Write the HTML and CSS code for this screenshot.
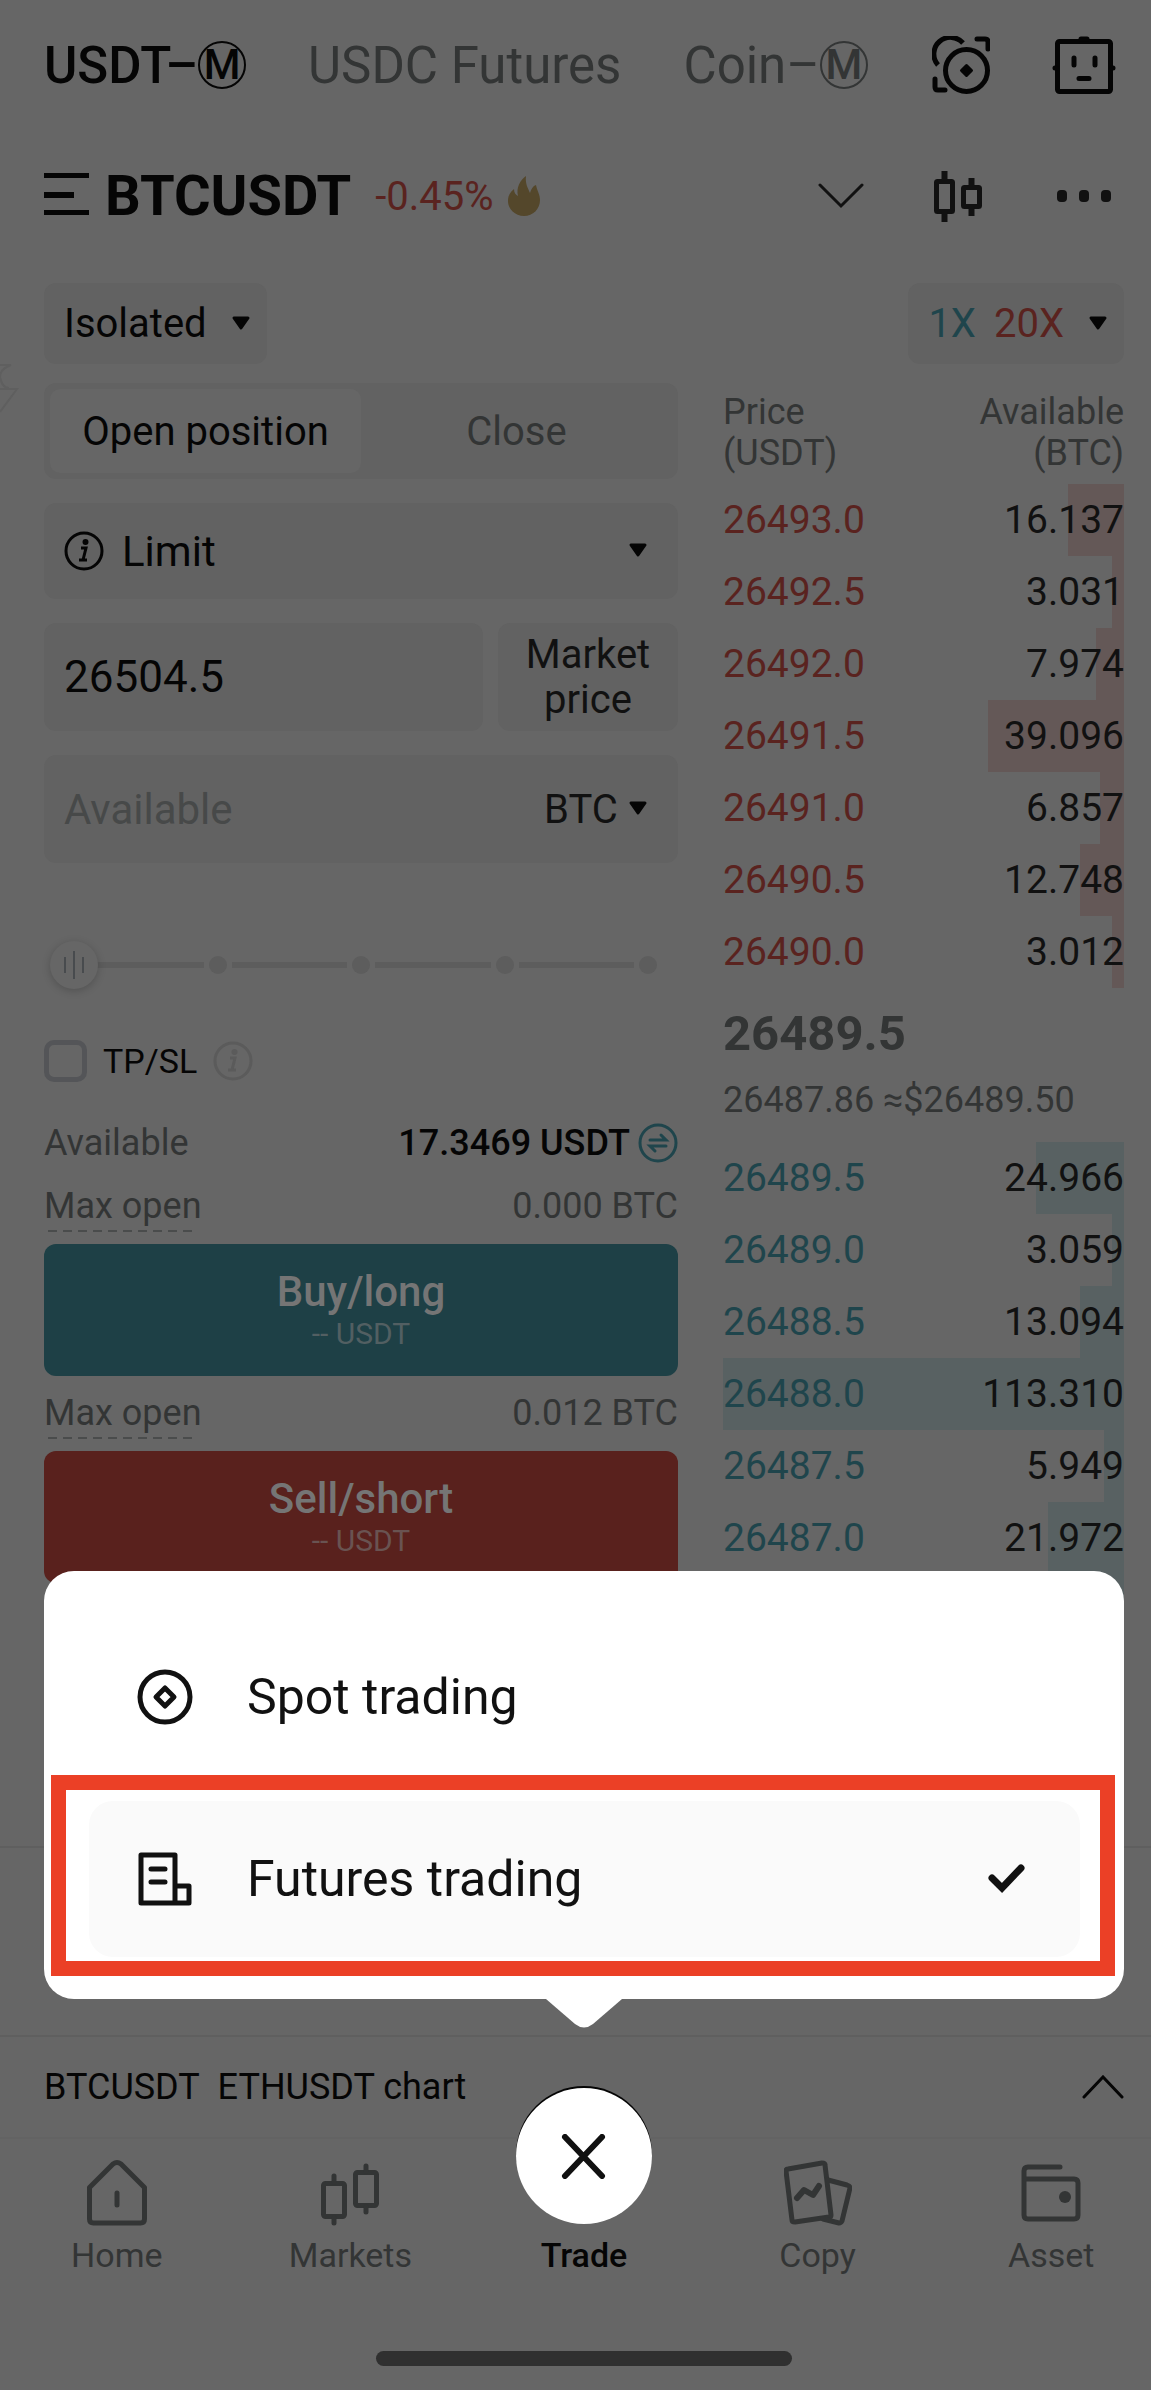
FILE: index.html
```html
<!DOCTYPE html>
<html lang="en">
<head>
    <meta charset="UTF-8">
    <meta name="viewport" content="width=device-width, initial-scale=1.0">
    <title>BTCUSDT Futures</title>
    <link rel="stylesheet" href="styles.css">
</head>
<body>
    <div class="app">
        <header class="topbar">
            <nav class="tabs">
                <a href="#usdt" class="active">USDT–<span class="circled">M</span></a>
                <a href="#usdc">USDC Futures</a>
                <a href="#coin">Coin–<span class="circled">M</span></a>
            </nav>
            <div class="icons">
                <button type="button" aria-label="Convert">
                    <svg width="58" height="58" viewBox="0 0 58 58" fill="none" stroke="#050505" stroke-width="5" stroke-linecap="round">
                        <path d="M31 7A16 16 0 0 0 6 29" stroke-linecap="butt"/>
                        <path d="M45 3h8q3 0 3 3v7M3 43v8q0 3 3 3h7"/>
                        <circle cx="34.500" cy="34.500" r="21"/>
                        <path d="M34.500 29.500l5 5-5 5-5-5z" fill="#050505" stroke-width="3" stroke-linejoin="round"/>
                    </svg>
                </button>
                <button type="button" aria-label="Trading bot">
                    <svg width="64" height="58" viewBox="0 0 64 58" fill="none" stroke="#050505" stroke-width="5" stroke-linecap="round">
                        <rect x="5.500" y="5.500" width="53" height="50" rx="2"/>
                        <path d="M29 3h6M3 32h1M60 32h1M22 22v7M43 22v7M27 42.500h10"/>
                    </svg>
                </button>
            </div>
        </header>

        <section class="pair">
            <button type="button" aria-label="Menu">
                <svg width="45" height="46" viewBox="0 0 45 46" fill="#050505">
                    <path d="M0 0h45v5H0zM0 19h30v6H0zM0 37h45v5H0z"/>
                </svg>
            </button>
            <h1>BTCUSDT</h1>
            <span class="change">-0.45%</span>
            <svg width="32" height="40" viewBox="0 0 32 40" fill="#54472b">
                <path d="M18 0C12 4 8 12 10 20C8 19 6 17 6 13C2 16 0 20 0 25C0 33 7 40 16 40C25 40 32 33 32 24C32 18 29 15 28 9C25 10 23 13 22 17C20 12 17 8 18 0z"/>
            </svg>
            <div class="icons">
                <button type="button" aria-label="Expand chart">
                    <svg width="46" height="26" viewBox="0 0 46 26" fill="none" stroke="#111" stroke-width="3" stroke-linecap="round">
                        <path d="M2 2l21 21L44 2"/>
                    </svg>
                </button>
                <button type="button" aria-label="Candles">
                    <svg width="48" height="51" viewBox="0 0 48 51" fill="none" stroke="#111" stroke-width="5">
                        <rect x="2.500" y="10.500" width="16" height="30" rx="1"/>
                        <rect x="29.500" y="16.500" width="16" height="19" rx="1"/>
                        <path d="M10.500 0v9M10.500 41v10M37.500 7v8M37.500 36v9" stroke-width="6"/>
                    </svg>
                </button>
                <button type="button" aria-label="More">
                    <svg width="64" height="12" viewBox="0 0 64 12" fill="#111">
                        <rect x="5" width="10" height="12" rx="4"/>
                        <rect x="27" width="10" height="12" rx="4"/>
                        <rect x="49" width="10" height="12" rx="4"/>
                    </svg>
                </button>
            </div>
        </section>

        <section class="mode-row">
            <div class="chip">
                <select aria-label="Margin mode">
                    <option>Isolated</option>
                </select>
                <svg class="caret" viewBox="0 0 20 16"><path d="M3 2h14l-7 10z"/></svg>
            </div>
            <button type="button" class="chip">
                <span class="long">1X</span>
                <span class="short">20X</span>
                <svg class="caret" viewBox="0 0 20 16"><path d="M3 2h14l-7 10z"/></svg>
            </button>
        </section>

        <svg class="float-icon" width="22" height="66" viewBox="0 0 22 66" fill="none" stroke="#5f5f5f" stroke-width="2">
            <path d="M0 9h11Q0 13 0 21Q2 32 9 32M0 33h17L0 56"/>
        </svg>

        <main class="trade">
            <form class="order-form">
                <div class="segmented">
                    <button type="button" class="active">Open position</button>
                    <button type="button">Close</button>
                </div>
                <div class="field order-type">
                    <svg width="40" height="40" viewBox="0 0 40 40" fill="none" stroke="#050505" stroke-width="3">
                        <circle cx="20" cy="20" r="18"/>
                        <path d="M17 17h5l-3 12M15 29h8"/>
                        <circle cx="21.500" cy="11" r="1.500"/>
                    </svg>
                    <select aria-label="Order type">
                        <option>Limit</option>
                    </select>
                    <svg class="caret" viewBox="0 0 20 16"><path d="M3 2h14l-7 10z"/></svg>
                </div>
                <div class="price-row">
                    <input type="text" class="field" value="26504.5" aria-label="Price">
                    <button type="button" class="field">Market price</button>
                </div>
                <div class="field amount">
                    <input type="text" placeholder="Available" aria-label="Amount">
                    <select aria-label="Unit">
                        <option>BTC</option>
                    </select>
                    <svg class="caret" viewBox="0 0 20 16"><path d="M3 2h14l-7 10z"/></svg>
                </div>

                <div class="slider">
                    <div class="marks">
                        <i class="line"></i><i class="dot"></i>
                        <i class="line"></i><i class="dot"></i>
                        <i class="line"></i><i class="dot"></i>
                        <i class="line"></i><i class="dot"></i>
                    </div>
                    <input type="range" min="0" max="100" value="0" aria-label="Amount percent">
                </div>

                <div class="tpsl">
                    <input type="checkbox" id="tpsl">
                    <label for="tpsl">TP/SL</label>
                    <svg width="40" height="40" viewBox="0 0 40 40" fill="none" stroke="#5b5b5b" stroke-width="3">
                        <circle cx="20" cy="20" r="18"/>
                        <path d="M17 17h5l-3 12M15 29h8"/>
                        <circle cx="21.500" cy="11" r="1.500"/>
                    </svg>
                </div>

                <div class="info-row">
                    <span>Available</span>
                    <span class="balance">17.3469 USDT
                        <svg width="40" height="40" viewBox="0 0 40 40" fill="none" stroke="#1f454c" stroke-width="3" stroke-linecap="round">
                            <circle cx="20" cy="20" r="18"/>
                            <path d="M12 17h16l-5-5M28 23H12l5 5"/>
                        </svg>
                    </span>
                </div>
                <div class="info-row max">
                    <span class="hint">Max open</span>
                    <span>0.000 BTC</span>
                </div>
                <button type="button" class="order buy">Buy/long<small>-- USDT</small></button>
                <div class="info-row max">
                    <span class="hint">Max open</span>
                    <span>0.012 BTC</span>
                </div>
                <button type="button" class="order sell">Sell/short<small>-- USDT</small></button>
            </form>

            <section class="book">
                <div class="book-head">
                    <span>Price<br>(USDT)</span>
                    <span>Available<br>(BTC)</span>
                </div>
                <ul class="asks">
                    <li style="--depth: 14%"><span>26493.0</span><b>16.137</b></li>
                    <li style="--depth: 3%"><span>26492.5</span><b>3.031</b></li>
                    <li style="--depth: 7%"><span>26492.0</span><b>7.974</b></li>
                    <li style="--depth: 34%"><span>26491.5</span><b>39.096</b></li>
                    <li style="--depth: 6%"><span>26491.0</span><b>6.857</b></li>
                    <li style="--depth: 11%"><span>26490.5</span><b>12.748</b></li>
                    <li style="--depth: 3%"><span>26490.0</span><b>3.012</b></li>
                </ul>
                <div class="last">
                    <strong>26489.5</strong>
                    <span>26487.86 ≈$26489.50</span>
                </div>
                <ul class="bids">
                    <li style="--depth: 22%"><span>26489.5</span><b>24.966</b></li>
                    <li style="--depth: 3%"><span>26489.0</span><b>3.059</b></li>
                    <li style="--depth: 11%"><span>26488.5</span><b>13.094</b></li>
                    <li style="--depth: 100%"><span>26488.0</span><b>113.310</b></li>
                    <li style="--depth: 5%"><span>26487.5</span><b>5.949</b></li>
                    <li style="--depth: 19%"><span>26487.0</span><b>21.972</b></li>
                    <li style="--depth: 12%"></li>
                </ul>
            </section>
        </main>

        <hr>

        <footer class="dock">
            <div class="sheet">
                <button type="button" class="option">
                    <svg width="56" height="56" viewBox="0 0 56 56" fill="none" stroke="#111" stroke-width="5">
                        <circle cx="28" cy="28" r="25"/>
                        <path d="M28 19l9 9-9 9-9-9z" stroke-linejoin="round"/>
                    </svg>
                    <span>Spot trading</span>
                </button>
                <div class="highlight">
                    <button type="button" class="option selected">
                        <svg width="56" height="56" viewBox="0 0 56 56" fill="none" stroke="#111" stroke-width="5" stroke-linejoin="round">
                            <path d="M4 4h34v48H4zM38 35h14v17H38z"/>
                            <path d="M14 18h14M14 31h14" stroke-linecap="round"/>
                        </svg>
                        <span>Futures trading</span>
                        <svg width="38" height="30" viewBox="0 0 38 30" fill="none" stroke="#111" stroke-width="7">
                            <path d="M4 14l10 10L33 4" stroke-linecap="round"/>
                        </svg>
                    </button>
                </div>
                <svg class="pointer" width="76" height="29" viewBox="0 0 76 29" fill="#fff">
                    <path d="M0 0h76L47 25q-9 7-18 0z"/>
                </svg>
            </div>

            <div class="chart-row">
                <span>BTCUSDT&nbsp; ETHUSDT chart</span>
                <button type="button" aria-label="Show chart">
                    <svg width="42" height="24" viewBox="0 0 42 24" fill="none" stroke="#050505" stroke-width="3" stroke-linecap="round">
                        <path d="M2 22L21 2l19 20"/>
                    </svg>
                </button>
            </div>

            <nav class="bottom-nav">
                <a href="#home">
                    <svg width="68" height="68" viewBox="0 0 68 68" fill="none" stroke="#333535" stroke-width="5" stroke-linecap="round">
                        <path d="M6.500 28.500L30 5q4-3 8 0l23.500 23.500V60q0 4-4 4h-47q-4 0-4-4z" stroke-linejoin="round"/>
                        <path d="M34 34v12"/>
                    </svg>
                    Home
                </a>
                <a href="#markets">
                    <svg width="68" height="68" viewBox="0 0 68 68" fill="none" stroke="#333535" stroke-width="5" stroke-linecap="round">
                        <rect x="7.500" y="24.500" width="21" height="33" rx="2"/>
                        <rect x="39.500" y="13.500" width="21" height="33" rx="2"/>
                        <path d="M18 17v6M18 59v5M50 7v5M50 48v5"/>
                    </svg>
                    Markets
                </a>
                <a href="#trade" class="active">
                    <span class="close">
                        <svg width="45" height="45" viewBox="0 0 45 45" stroke="#111" stroke-width="6" stroke-linecap="round">
                            <path d="M4 3l37 39M41 3L4 42"/>
                        </svg>
                    </span>
                    Trade
                </a>
                <a href="#copy">
                    <svg width="68" height="68" viewBox="0 0 68 68" fill="none" stroke="#333535" stroke-width="5" stroke-linejoin="round" stroke-linecap="round">
                        <path d="M2 12q0-2 2-2l34-6q3 0 3 2l6 50q0 2-2 2l-34 5q-3 0-3-2z"/>
                        <path d="M44 21l19 5q3 1 3 3l-8 33q-1 2-3 2l-16-4"/>
                        <path d="M13 39l7-8 9 5 6-9" stroke-width="6"/>
                    </svg>
                    Copy
                </a>
                <a href="#asset">
                    <svg width="68" height="68" viewBox="0 0 68 68" fill="none" stroke="#333535" stroke-width="5" stroke-linejoin="round" stroke-linecap="round">
                        <path d="M43 8H11q-4 0-4 4v44q0 4 4 4h46q4 0 4-4V24q0-4-4-4H8"/>
                        <circle cx="48" cy="38" r="6" fill="#333535" stroke="none"/>
                    </svg>
                    Asset
                </a>
            </nav>
            <div class="home-bar"></div>
        </footer>
    </div>
</body>
</html>
```

FILE: styles.css
```css
* {
    box-sizing: border-box;
}
body {
    margin: 0;
    overflow-x: hidden;
    background-color: #666;
    color: #050505;
    font-family: Roboto, "Noto Sans", sans-serif;
    font-size: 40px;
}
button, input, select {
    font: inherit;
    color: inherit;
    background: none;
    border: none;
    padding: 0;
    margin: 0;
}
button {
    cursor: pointer;
}
select {
    appearance: none;
}
a {
    color: inherit;
    text-decoration: none;
}
svg {
    display: block;
    flex: none;
}
.app {
    position: relative;
    display: flex;
    flex-direction: column;
    min-height: 100vh;
}

/* top */
.topbar, .pair, .mode-row, .trade {
    padding: 0 27px 0 44px;
}
.topbar {
    display: flex;
    align-items: center;
    justify-content: space-between;
    height: 130px;
}
.tabs {
    display: flex;
    gap: 62px;
    font-size: 51px;
    color: #333535;
}
.tabs a {
    display: flex;
    align-items: center;
}
.tabs .active {
    color: #050505;
    font-weight: 500;
}
.circled {
    width: 48px;
    height: 48px;
    border: 2px solid;
    border-radius: 50%;
    font-size: 42px;
    font-weight: 500;
    line-height: 44px;
    text-align: center;
}
.icons {
    display: flex;
    align-items: center;
    gap: 62px;
    padding-right: 8px;
}
.pair {
    display: flex;
    align-items: center;
    height: 132px;
}
.pair h1 {
    margin: 0 24px 0 16px;
    font-size: 56px;
}
.change {
    margin-right: 14px;
    color: #5a231f;
}
.pair .icons {
    gap: 70px;
    margin-left: auto;
}
.mode-row {
    display: flex;
    justify-content: space-between;
    margin: 21px 0 19px;
}
.chip {
    display: flex;
    align-items: center;
    gap: 18px;
    height: 81px;
    padding: 0 16px 0 20px;
    background-color: #626262;
    border-radius: 12px;
}
.caret {
    width: 20px;
    height: 16px;
    fill: #050505;
    stroke: #050505;
    stroke-width: 3px;
    stroke-linejoin: round;
}
.chip .caret {
    margin-left: 6px;
}
.long {
    color: #1f454c;
}
.short {
    color: #5a231f;
}
.float-icon {
    position: absolute;
    top: 356px;
    left: 0;
}

/* order form */
.trade {
    display: grid;
    grid-template-columns: minmax(0, 634fr) minmax(0, 401fr);
    gap: 45px;
    align-items: start;
}
.order-form {
    display: flex;
    flex-direction: column;
}
.field, .segmented {
    height: 96px;
    margin-bottom: 24px;
    background-color: #626262;
    border-radius: 12px;
}
.segmented {
    display: flex;
    padding: 6px;
}
.segmented button {
    flex: 1;
    border-radius: 10px;
    color: #333535;
}
.segmented .active {
    background-color: #666;
    color: #050505;
}
.order-type, .amount {
    display: flex;
    align-items: center;
    padding: 0 30px 0 20px;
}
.order-type select {
    flex: 1;
    margin-left: 18px;
    font-size: 42px;
}
.price-row {
    display: grid;
    grid-template-columns: minmax(0, 439fr) minmax(0, 180fr);
    gap: 15px;
}
.price-row .field, .amount {
    height: 108px;
}
.price-row input {
    width: 100%;
    padding: 0 20px;
    font-size: 44px;
}
.price-row button {
    padding: 0 16px;
    line-height: 45px;
    color: #111;
}
.amount {
    margin-bottom: 78px;
    color: #111;
}
.amount input {
    flex: 1;
    min-width: 0;
    font-size: 42px;
}
.amount input::placeholder {
    color: #474949;
}
.amount .caret {
    margin-left: 10px;
}
.slider {
    position: relative;
    height: 48px;
    margin-bottom: 51px;
}
.marks {
    display: flex;
    align-items: center;
    gap: 5px;
    height: 48px;
    margin: 0 21px 0 44px;
}
.marks .line {
    flex: 1;
    height: 6px;
    background-color: #5d5d5d;
}
.marks .dot {
    width: 18px;
    height: 18px;
    border-radius: 50%;
    background-color: #5d5d5d;
}
.slider input {
    position: absolute;
    inset: 0 6px;
    width: calc(100% - 12px);
    appearance: none;
}
.slider input::-webkit-slider-thumb {
    appearance: none;
    width: 48px;
    height: 48px;
    border-radius: 50%;
    background:
        linear-gradient(#484b4e, #484b4e) 14px center / 2px 16px no-repeat,
        linear-gradient(#484b4e, #484b4e) center / 2px 28px no-repeat,
        linear-gradient(#484b4e, #484b4e) 32px center / 2px 16px no-repeat,
        #666;
    box-shadow: 0 2px 8px rgba(0, 0, 0, 0.2);
}
.tpsl {
    display: flex;
    align-items: center;
    gap: 16px;
    height: 42px;
    margin-bottom: 38px;
    font-size: 34px;
}
.tpsl input {
    appearance: none;
    width: 43px;
    height: 42px;
    border: 5px solid #545558;
    border-radius: 10px;
}
.info-row {
    display: flex;
    justify-content: space-between;
    font-size: 36px;
    line-height: 46px;
    color: #333535;
}
.balance {
    display: flex;
    align-items: center;
    gap: 8px;
    font-weight: 500;
    color: #050505;
}
.max {
    margin: 14px 0 12px;
    height: 49px;
}
.info-row + .max {
    margin-top: 17px;
}
.hint {
    background: repeating-linear-gradient(90deg, #4a4c4c 0 9px, transparent 9px 15px) 4px bottom / 145px 2px no-repeat;
}
.order {
    height: 132px;
    border-radius: 12px;
    font-size: 42px;
    font-weight: 500;
    line-height: 48px;
    color: #757575;
}
.order small {
    display: block;
    font-size: 30px;
    font-weight: 400;
    line-height: 36px;
    opacity: 0.6;
}
.buy {
    background-color: #1e4046;
}
.sell {
    background-color: #59211d;
}

/* order book */
.book-head {
    display: flex;
    justify-content: space-between;
    padding: 9px 0 10px;
    font-size: 36px;
    line-height: 41px;
    color: #333535;
}
.book-head span + span {
    text-align: right;
}
.book ul {
    margin: 0;
    padding: 0;
    list-style: none;
    font-size: 39px;
}
.book li {
    display: flex;
    align-items: center;
    justify-content: space-between;
    height: 72px;
    background: linear-gradient(var(--bar), var(--bar)) right / var(--depth) 100% no-repeat;
}
.book b {
    font-weight: 400;
    color: #111;
}
.asks {
    --bar: #645857;
    color: #5a231f;
}
.bids {
    --bar: #586162;
    color: #1f454c;
}
.last {
    display: flex;
    flex-direction: column;
    gap: 16px;
    padding: 18px 0 20px;
    font-size: 36px;
    line-height: 44px;
    color: #333535;
}
.last strong {
    font-size: 49px;
    line-height: 56px;
}
hr {
    width: 100%;
    margin: 200px 0 0;
    border: none;
    border-top: 2px solid #5f5f5f;
}

/* bottom */
.dock {
    position: relative;
    margin-top: auto;
    padding-bottom: 24px;
    border-top: 2px solid #5f5f5f;
}
.sheet {
    position: absolute;
    right: 27px;
    bottom: calc(100% + 38px);
    left: 44px;
    padding: 48px 9px 23px 7px;
    background-color: #fff;
    border-radius: 30px;
    color: #111;
}
.option {
    display: flex;
    align-items: center;
    gap: 54px;
    width: 100%;
    height: 156px;
    padding: 0 54px 0 48px;
    border-radius: 24px;
    font-size: 50px;
    text-align: left;
}
.sheet > .option {
    padding-left: 86px;
}
.option span {
    flex: 1;
}
.selected {
    background-color: #fafafa;
}
.highlight {
    padding: 11px 20px 4px 23px;
    border: 15px solid #eb4026;
}
.pointer {
    position: absolute;
    top: 100%;
    left: 502px;
}
.chart-row {
    display: flex;
    align-items: center;
    justify-content: space-between;
    height: 102px;
    padding: 0 27px 0 44px;
    border-bottom: 2px solid #636363;
    font-size: 36px;
}
.bottom-nav {
    display: grid;
    grid-template-columns: repeat(5, 1fr);
    margin-right: -17px;
    padding: 20px 0 76px;
    font-size: 34px;
    line-height: 40px;
    color: #333535;
}
.bottom-nav a {
    display: flex;
    flex-direction: column;
    align-items: center;
    gap: 8px;
}
.bottom-nav .active {
    color: #050505;
    font-weight: 500;
}
.close {
    display: flex;
    align-items: center;
    justify-content: center;
    width: 136px;
    height: 136px;
    margin: -71px 0 3px;
    background-color: #fff;
    border-radius: 50%;
    box-shadow: 0 -2px 0 #050505;
}
.home-bar {
    width: 416px;
    height: 15px;
    margin: 0 auto;
    transform: translateX(8px);
    border-radius: 8px;
    background-color: #303030;
}
```
